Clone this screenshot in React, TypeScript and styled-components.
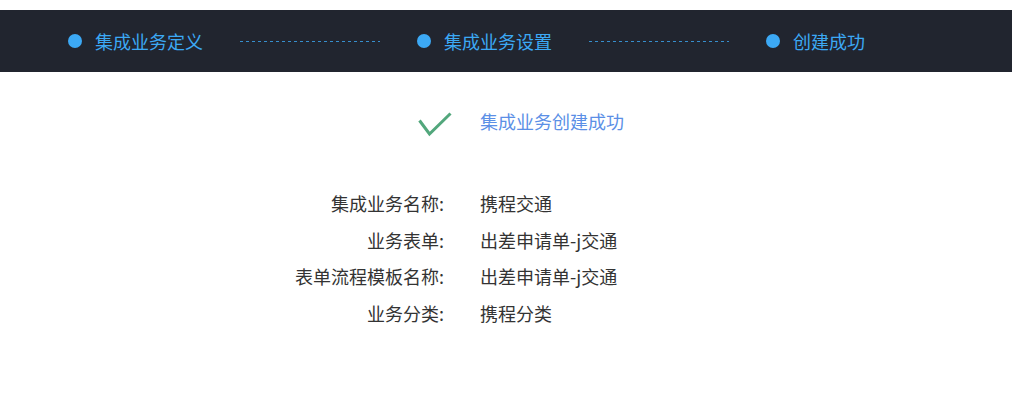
import React from 'react';
import styled, { createGlobalStyle } from 'styled-components';

const GlobalStyle = createGlobalStyle`
  html, body {
    margin: 0;
    padding: 0;
    background: #fff;
    font-family: "Microsoft YaHei", "Noto Sans CJK SC", "Liberation Sans", sans-serif;
  }
`;

const Page = styled.div`
  padding-top: 10px;
`;

const StepBar = styled.div`
  height: 62px;
  background: #21252f;
  display: flex;
  align-items: center;
  padding-left: 68px;
`;

const Step = styled.div`
  display: flex;
  align-items: center;
  gap: 13px;
`;

const Dot = styled.span`
  width: 14px;
  height: 14px;
  border-radius: 50%;
  background: #3ca9f5;
  flex-shrink: 0;
`;

const StepLabel = styled.span`
  font-size: 18px;
  color: #3ca9f5;
  line-height: 1;
`;

const Dashes = styled.div`
  width: 140px;
  height: 1px;
  margin: 0 37px;
  background: repeating-linear-gradient(
    to right,
    #3ca9f5 0,
    #3ca9f5 3px,
    transparent 3px,
    transparent 6px
  );
  opacity: 0.8;
`;

const Result = styled.div`
  display: flex;
  align-items: center;
  margin: 40px 0 0 418px;
  height: 25px;
`;

const ResultText = styled.span`
  margin-left: 28px;
  font-size: 18px;
  color: #5b8fe6;
  margin-top: -7px;
`;

const Details = styled.div`
  display: grid;
  grid-template-columns: 444px auto;
  column-gap: 36px;
  margin-top: 48px;
`;

const Label = styled.div`
  text-align: right;
  font-size: 18px;
  color: #333;
  line-height: 36.7px;
`;

const Value = styled.div`
  font-size: 18px;
  color: #333;
  line-height: 36.7px;
`;

const steps = ['集成业务定义', '集成业务设置', '创建成功'];

const rows: [string, string][] = [
  ['集成业务名称:', '携程交通'],
  ['业务表单:', '出差申请单-j交通'],
  ['表单流程模板名称:', '出差申请单-j交通'],
  ['业务分类:', '携程分类'],
];

export default function App() {
  return (
    <Page>
      <GlobalStyle />
      <StepBar>
        {steps.map((s, i) => (
          <React.Fragment key={s}>
            <Step>
              <Dot />
              <StepLabel>{s}</StepLabel>
            </Step>
            {i < steps.length - 1 && <Dashes />}
          </React.Fragment>
        ))}
      </StepBar>
      <Result>
        <svg width="34" height="25" viewBox="0 0 34 25">
          <polyline
            points="1.5,8.5 11.5,22 32.5,1.5"
            fill="none"
            stroke="#52a77c"
            strokeWidth="3"
          />
        </svg>
        <ResultText>集成业务创建成功</ResultText>
      </Result>
      <Details>
        {rows.map(([k, v]) => (
          <React.Fragment key={k}>
            <Label>{k}</Label>
            <Value>{v}</Value>
          </React.Fragment>
        ))}
      </Details>
    </Page>
  );
}
